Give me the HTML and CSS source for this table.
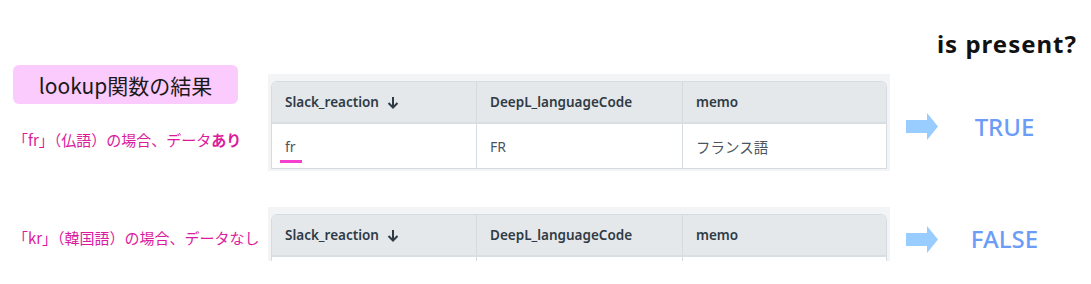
FILE: index.html
```html
<!DOCTYPE html>
<html lang="ja">
<head>
<meta charset="utf-8">
<link rel="stylesheet" href="styles.css">
</head>
<body>
<div class="page">
  <div class="top"><span class="question">is present?</span></div>

  <div class="block block-1">
    <div class="left">
      <div class="badge">lookup関数の結果</div>
      <div class="label label-1">「fr」（仏語）の場合、データ<b>あり</b></div>
    </div>
    <div class="strip strip-1">
      <div class="table">
        <div class="row head">
          <div class="cell">Slack_reaction
            <svg class="sort" width="12" height="13" viewBox="0 0 12 13"><path d="M6 1v10.5M1.5 7L6 11.5 10.5 7" fill="none" stroke="#2f3b45" stroke-width="2"/></svg>
          </div>
          <div class="cell">DeepL_languageCode</div>
          <div class="cell">memo</div>
        </div>
        <div class="row body">
          <div class="cell first">fr<span class="mark"></span></div>
          <div class="cell">FR</div>
          <div class="cell">フランス語</div>
        </div>
      </div>
    </div>
    <svg class="arrow arrow-1" width="32" height="27" viewBox="0 0 32 27"><path d="M0 7h21V0l11 13.5L21 27v-7H0z" fill="#99ccff"/></svg>
    <div class="result result-1">TRUE</div>
  </div>

  <div class="block block-2">
    <div class="left">
      <div class="label label-2">「kr」（韓国語）の場合、データなし</div>
    </div>
    <div class="strip strip-2">
      <div class="table">
        <div class="row head">
          <div class="cell">Slack_reaction
            <svg class="sort" width="12" height="13" viewBox="0 0 12 13"><path d="M6 1v10.5M1.5 7L6 11.5 10.5 7" fill="none" stroke="#2f3b45" stroke-width="2"/></svg>
          </div>
          <div class="cell">DeepL_languageCode</div>
          <div class="cell">memo</div>
        </div>
        <div class="row body cut">
          <div class="cell"></div>
          <div class="cell"></div>
          <div class="cell"></div>
        </div>
      </div>
    </div>
    <svg class="arrow arrow-2" width="32" height="27" viewBox="0 0 32 27"><path d="M0 7h21V0l11 13.5L21 27v-7H0z" fill="#99ccff"/></svg>
    <div class="result result-2">FALSE</div>
  </div>
</div>
</body>
</html>
```

FILE: styles.css
```css
* { box-sizing: border-box; }
html, body { margin: 0; padding: 0; background: #fff; }
body { font-family: "Noto Sans", "Noto Sans CJK JP", sans-serif; }
.page { width: 1091px; height: 284px; overflow: hidden; }

.top { height: 65px; display: flex; justify-content: flex-end; padding-right: 14px; }
.question {
  margin-top: 30px; line-height: 28px; font-size: 24px; font-weight: 700;
  color: #111; font-family: "Noto Sans", sans-serif; letter-spacing: 1px;
}

.block { display: grid; grid-template-columns: 268px 622px 48px 133px; align-items: start; }
.block-1 { height: 107px; }
.block-2 { height: 112px; }

.left { padding-left: 13px; }
.badge {
  width: 225px; height: 39px; background: #fccbfd; border-radius: 6px;
  display: flex; align-items: center; justify-content: center;
  font-family: "Noto Sans CJK JP", sans-serif; font-size: 21px; color: #1a1a1a;
}
.label {
  font-family: "Noto Sans CJK JP", sans-serif; font-size: 15px; line-height: 20px;
  color: #dc1a9c; white-space: nowrap; margin-left: 0;
}
.label b { font-weight: 700; }
.label-1 { margin-top: 26px; }
.label-2 { margin-top: 56px; }

.strip { background: #f3f4f6; padding: 7px 3px 2px 3px; }
.strip-1 { margin-top: 9px; }
.strip-2 { margin-top: 35px; height: 54px; padding-bottom: 0; overflow: hidden; }

.table {
  border: 1px solid #d5dbe1; border-radius: 6px 6px 0 0; border-bottom: none;
  background: #fff; overflow: hidden;
}
.row { display: grid; grid-template-columns: 205px 206px 1fr; }
.cell {
  border-right: 1px solid #d5dbe1; padding-left: 13px;
  display: flex; align-items: center; white-space: nowrap;
}
.cell:last-child { border-right: none; }
.head { background: #e5e8eb; border-bottom: 2px solid #d9dee3; }
.head .cell { height: 40px; font-size: 13.5px; font-weight: 600; color: #2f3b45; }
.body .cell { height: 45px; font-size: 14px; color: #4a5560; border-bottom: 1px solid #d5dbe1; position: relative; }
.body .cell:nth-child(3) { font-family: "Noto Sans CJK JP", sans-serif; font-size: 14.5px; }
.sort { margin-left: 8px; }
.mark {
  position: absolute; left: 8px; top: 36px; width: 22px; height: 3px; background: #f43fcf;
}

.arrow { display: block; margin-left: 16px; }
.arrow-1 { margin-top: 48px; }
.arrow-2 { margin-top: 54px; }

.result {
  text-align: center; color: #6b9cf7; font-size: 24px; font-weight: 500;
  font-family: "Noto Sans", sans-serif; line-height: 28px;
}
.result-1 { margin-top: 48px; }
.result-2 { margin-top: 53px; }
```
